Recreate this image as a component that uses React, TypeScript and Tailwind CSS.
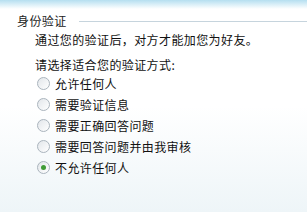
const options = ["允许任何人", "需要验证信息", "需要正确回答问题", "需要回答问题并由我审核", "不允许任何人"];

function Radio({ checked }: { checked: boolean }) {
  return (
    <span className="flex h-[13px] w-[13px] items-center justify-center rounded-full border border-[#aab4bd] bg-gradient-to-br from-[#e2e6ea] to-white">
      {checked ? <span className="h-[5px] w-[5px] rounded-full bg-[#3f9b35]" /> : null}
    </span>
  );
}

export default function App() {
  return (
    <div
      className="h-[212px] w-[307px] overflow-hidden bg-gradient-to-b from-white via-white to-[#eef5f8] text-[12px] leading-[16px] tracking-[0.4px] text-[#111]"
      style={{ fontFamily: '"Noto Sans CJK SC", "Noto Sans", sans-serif' }}
    >
      <div className="h-[9px] bg-gradient-to-b from-[#b5dff0] to-white" />
      <div className="mt-[4px] flex items-center pl-[17px]">
        <span className="text-[#222]">身份验证</span>
        <div className="ml-[12px] h-px flex-1 bg-[#c6d4dd]" />
      </div>
      <div className="mt-[3px] pl-[35px]">通过您的验证后，对方才能加您为好友。</div>
      <div className="mt-[9px] pl-[35px]">请选择适合您的验证方式:</div>
      <div className="flex flex-col pl-[37px]">
        {options.map((o, i) => (
          <div key={o} className="flex h-[21px] items-center gap-[5px]">
            <Radio checked={i === 4} />
            <span>{o}</span>
          </div>
        ))}
      </div>
    </div>
  );
}
